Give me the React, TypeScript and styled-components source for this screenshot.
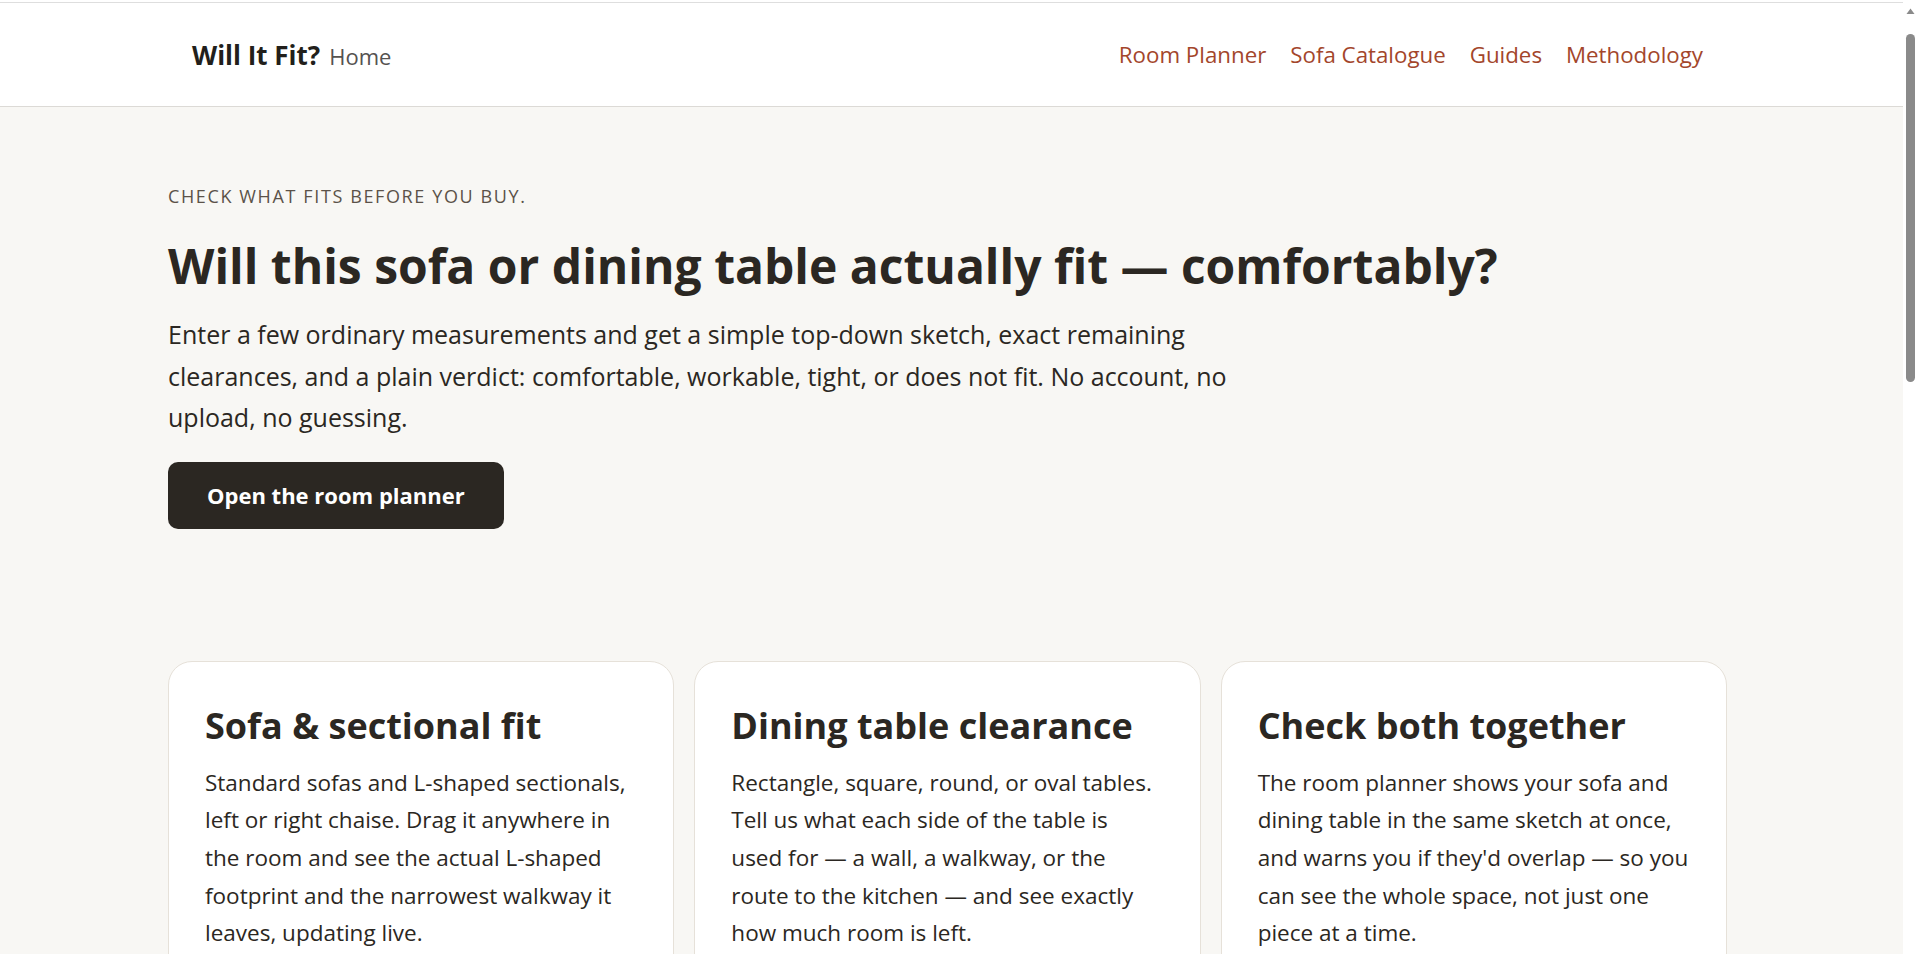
import React from 'react';
import styled, { createGlobalStyle } from 'styled-components';

const GlobalStyle = createGlobalStyle`
  * {
    box-sizing: border-box;
  }

  body {
    margin: 0;
    background-color: #f8f7f4;
    font-family: 'Open Sans', 'Noto Sans', sans-serif;
    color: #2b2722;
  }

  h1,
  h2,
  p {
    margin: 0;
  }
`;

const navLinks = ['Room Planner', 'Sofa Catalogue', 'Guides', 'Methodology'];

const features = [
  {
    title: 'Sofa & sectional fit',
    body: 'Standard sofas and L-shaped sectionals, left or right chaise. Drag it anywhere in the room and see the actual L-shaped footprint and the narrowest walkway it leaves, updating live.',
  },
  {
    title: 'Dining table clearance',
    body: 'Rectangle, square, round, or oval tables. Tell us what each side of the table is used for — a wall, a walkway, or the route to the kitchen — and see exactly how much room is left.',
  },
  {
    title: 'Check both together',
    body: "The room planner shows your sofa and dining table in the same sketch at once, and warns you if they'd overlap — so you can see the whole space, not just one piece at a time.",
  },
];

export default function App() {
  return (
    <>
      <GlobalStyle />
      <TopEdge />
      <Header>
        <Brand href="#">
          <strong>Will It Fit?</strong>
          <span>Home</span>
        </Brand>
        <Nav>
          {navLinks.map(link => (
            <NavLink key={link} href="#">
              {link}
            </NavLink>
          ))}
        </Nav>
      </Header>

      <Main>
        <Hero>
          <Eyebrow>Check what fits before you buy.</Eyebrow>
          <h1>Will this sofa or dining table actually fit — comfortably?</h1>
          <Lead>
            Enter a few ordinary measurements and get a simple top-down sketch,
            exact remaining clearances, and a plain verdict: comfortable,
            workable, tight, or does not fit. No account, no upload, no
            guessing.
          </Lead>
          <PrimaryButton type="button">Open the room planner</PrimaryButton>
        </Hero>

        <CardGrid>
          {features.map(feature => (
            <Card key={feature.title}>
              <h2>{feature.title}</h2>
              <p>{feature.body}</p>
            </Card>
          ))}
        </CardGrid>
      </Main>

      <ScrollRail aria-hidden="true">
        <svg width="15" height="16" viewBox="0 0 15 16">
          <path d="M3.5 12 L7.5 6.5 L11.5 12 Z" fill="#8a8a8a" />
        </svg>
        <ScrollThumb />
      </ScrollRail>
    </>
  );
}

const TopEdge = styled.div`
  height: 3px;
  background-color: #fff;
  border-bottom: 1px solid #dedede;
`;

const Header = styled.header`
  padding: 0 215px 0 192px;
  height: 104px;
  display: flex;
  justify-content: space-between;
  align-items: center;
  background-color: #fff;
  border-bottom: 1px solid #dcdad6;
`;

const Brand = styled.a`
  display: flex;
  align-items: baseline;
  gap: 9px;
  text-decoration: none;

  strong {
    font-size: 26px;
    font-weight: 700;
    color: #221f1b;
  }

  span {
    font-size: 22px;
    color: #555250;
  }
`;

const Nav = styled.nav`
  display: flex;
  gap: 24px;
`;

const NavLink = styled.a`
  font-size: 22.3px;
  color: #a3462b;
  text-decoration: none;

  &:hover {
    text-decoration: underline;
  }
`;

const Main = styled.main`
  padding: 77px 191px 80px 168px;
`;

const Hero = styled.section`
  h1 {
    margin: 28px 0 0;
    font-size: 48px;
    line-height: 60px;
    font-weight: 700;
    color: #2b2722;
  }
`;

const Eyebrow = styled.p`
  font-size: 18px;
  line-height: 24px;
  letter-spacing: 0.09em;
  text-transform: uppercase;
  color: #5b5249;
`;

const Lead = styled.p`
  margin: 18px 0 0;
  max-width: 1100px;
  font-size: 25px;
  line-height: 41.6px;
  color: #2b2722;
`;

const PrimaryButton = styled.button`
  margin: 23px 0 0;
  padding: 0 39px;
  height: 67px;
  background-color: #2b2722;
  border: none;
  border-radius: 10px;
  font-family: inherit;
  font-size: 22px;
  font-weight: 700;
  color: #fff;
  cursor: pointer;

  &:hover {
    background-color: #1b1815;
  }
`;

const CardGrid = styled.section`
  margin: 132px 0 0;
  display: grid;
  grid-template-columns: repeat(3, 1fr);
  gap: 20px;
`;

const Card = styled.article`
  padding: 41px 36px 40px;
  background-color: #fff;
  border: 1px solid #e6e1d9;
  border-radius: 24px;

  h2 {
    font-size: 36px;
    line-height: 46px;
    font-weight: 700;
    color: #2b2722;
  }

  p {
    margin: 15px 0 0;
    font-size: 22.5px;
    line-height: 37.6px;
    color: #2b2722;
  }
`;

const ScrollRail = styled.div`
  position: fixed;
  top: 0;
  right: 0;
  width: 15px;
  height: 100vh;
  display: flex;
  flex-direction: column;
  align-items: center;
  background-color: #fff;

  svg {
    margin: 2px 0 0;
  }
`;

const ScrollThumb = styled.div`
  margin: 16px 0 0;
  width: 9px;
  height: 348px;
  background-color: #8a8a8a;
  border-radius: 5px;
`;
